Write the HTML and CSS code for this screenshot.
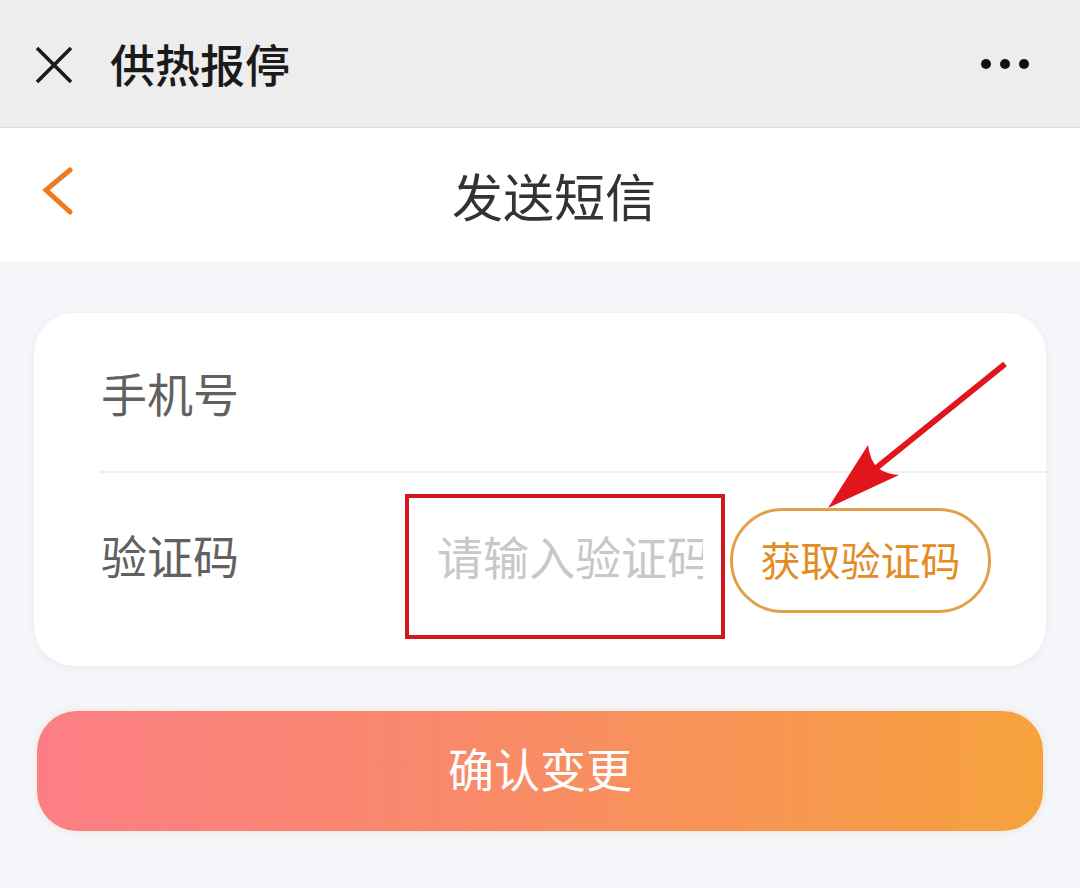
FILE: index.html
```html
<!DOCTYPE html>
<html lang="zh-CN">
<head>
    <meta charset="UTF-8">
    <meta name="viewport" content="width=device-width, initial-scale=1.0">
    <title>发送短信</title>
    <link rel="stylesheet" href="styles.css">
</head>
<body>
    <header class="wx-bar">
        <svg class="wx-close" width="40" height="40" viewBox="0 0 40 40">
            <path d="M3 3 L37 37 M37 3 L3 37" stroke="#1a1a1a" stroke-width="3.6" fill="none"/>
        </svg>
        <div class="wx-title">供热报停</div>
        <div class="wx-more"><span></span><span></span><span></span></div>
    </header>

    <nav class="nav-bar">
        <svg class="nav-back" width="36" height="52" viewBox="0 0 36 52">
            <path d="M28 3 L4 23 L28 45" stroke="#ee7b1f" stroke-width="5" fill="none" stroke-linecap="round" stroke-linejoin="miter"/>
        </svg>
        <div class="nav-title">发送短信</div>
        <div class="nav-side"></div>
    </nav>

    <main class="page">
        <section class="card">
            <div class="row row-phone">
                <span class="label">手机号</span>
            </div>
            <div class="row row-code">
                <span class="label">验证码</span>
                <div class="code-box">
                    <input class="code-input" type="text" placeholder="请输入验证码">
                </div>
                <button class="btn-code">获取验证码</button>
            </div>

            <!-- annotation arrow pointing at the button -->
            <svg class="arrow" width="200" height="160" viewBox="0 0 200 160">
                <line x1="185" y1="9" x2="50" y2="118" stroke="#e2141c" stroke-width="6"/>
                <path d="M8 153 L48 90 Q50 106 58 113 Q66 119 79 120 Z" fill="#e2141c"/>
            </svg>
        </section>

        <button class="btn-confirm">确认变更</button>
    </main>
</body>
</html>
```

FILE: styles.css
```css
body {
    margin: 0;
    padding: 0;
    background: #f4f6f9;
    font-family: "Noto Sans CJK SC", "Noto Sans", sans-serif;
    width: 1080px;
    height: 888px;
    overflow: hidden;
}

.wx-bar {
    height: 128px;
    box-sizing: border-box;
    background: #ededed;
    border-bottom: 1px solid #dadada;
    display: flex;
    align-items: center;
    padding: 0 51px 0 34px;
}

.wx-close {
    flex: none;
    margin-top: 2px;
}

.wx-title {
    margin-left: 36px;
    font-size: 45px;
    font-weight: 500;
    color: #1a1a1a;
    flex: 1;
}

.wx-more {
    display: flex;
    gap: 9px;
}

.wx-more span {
    width: 10px;
    height: 10px;
    border-radius: 50%;
    background: #111;
}

.nav-bar {
    height: 134px;
    background: #fff;
    display: grid;
    grid-template-columns: 1fr auto 1fr;
    align-items: center;
    padding-left: 28px;
}

.nav-back {
    margin: -4px 0 0 14px;
}

.nav-title {
    font-size: 51px;
    color: #333;
}

.page {
    padding-top: 51px;
}

.card {
    position: relative;
    margin: 0 34px;
    background: #fff;
    border-radius: 40px;
    box-shadow: 0 2px 8px rgba(0, 0, 0, 0.05);
    padding-left: 66px;
}

.row {
    display: flex;
    align-items: center;
    box-sizing: border-box;
}

.label {
    font-size: 46px;
    color: #616161;
    padding-left: 1px;
}

.row-phone {
    height: 160px;
    border-bottom: 2px solid #efefef;
}

.row-code {
    height: 193px;
    padding-bottom: 6px;
}

.row-code .label {
    width: 304px;
    margin-bottom: 26px;
}

.code-box {
    width: 320px;
    height: 145px;
    box-sizing: border-box;
    border: 4px solid #d0181e;
    padding: 29px 0 0 28px;
}

.code-input {
    display: block;
    width: 266px;
    height: 56px;
    border: none;
    outline: none;
    padding: 0;
    margin: 0;
    background: transparent;
    font-family: "Noto Sans CJK SC", "Noto Sans", sans-serif;
    font-size: 46px;
    color: #333;
}

.code-input::placeholder {
    color: #c8c8c8;
}

.btn-code {
    margin-left: 5px;
    margin-bottom: 12px;
    width: 261px;
    height: 105px;
    border: 3px solid #e2a04a;
    border-radius: 53px;
    background: #fff;
    color: #e38c24;
    font-family: "Noto Sans CJK SC", "Noto Sans", sans-serif;
    font-size: 40px;
    padding: 0 0 4px;
}

.arrow {
    position: absolute;
    left: 786px;
    top: 42px;
    pointer-events: none;
}

.btn-confirm {
    display: block;
    margin: 45px 37px 0;
    width: calc(100% - 74px);
    height: 120px;
    border: none;
    border-radius: 40px;
    background: linear-gradient(90deg, #fc7e85 0%, #f98a68 45%, #f6a23c 100%);
    box-shadow: 0 0 6px rgba(250, 170, 120, 0.35);
    color: #fff;
    font-family: "Noto Sans CJK SC", "Noto Sans", sans-serif;
    font-size: 46px;
    padding: 0 0 8px;
}
```
